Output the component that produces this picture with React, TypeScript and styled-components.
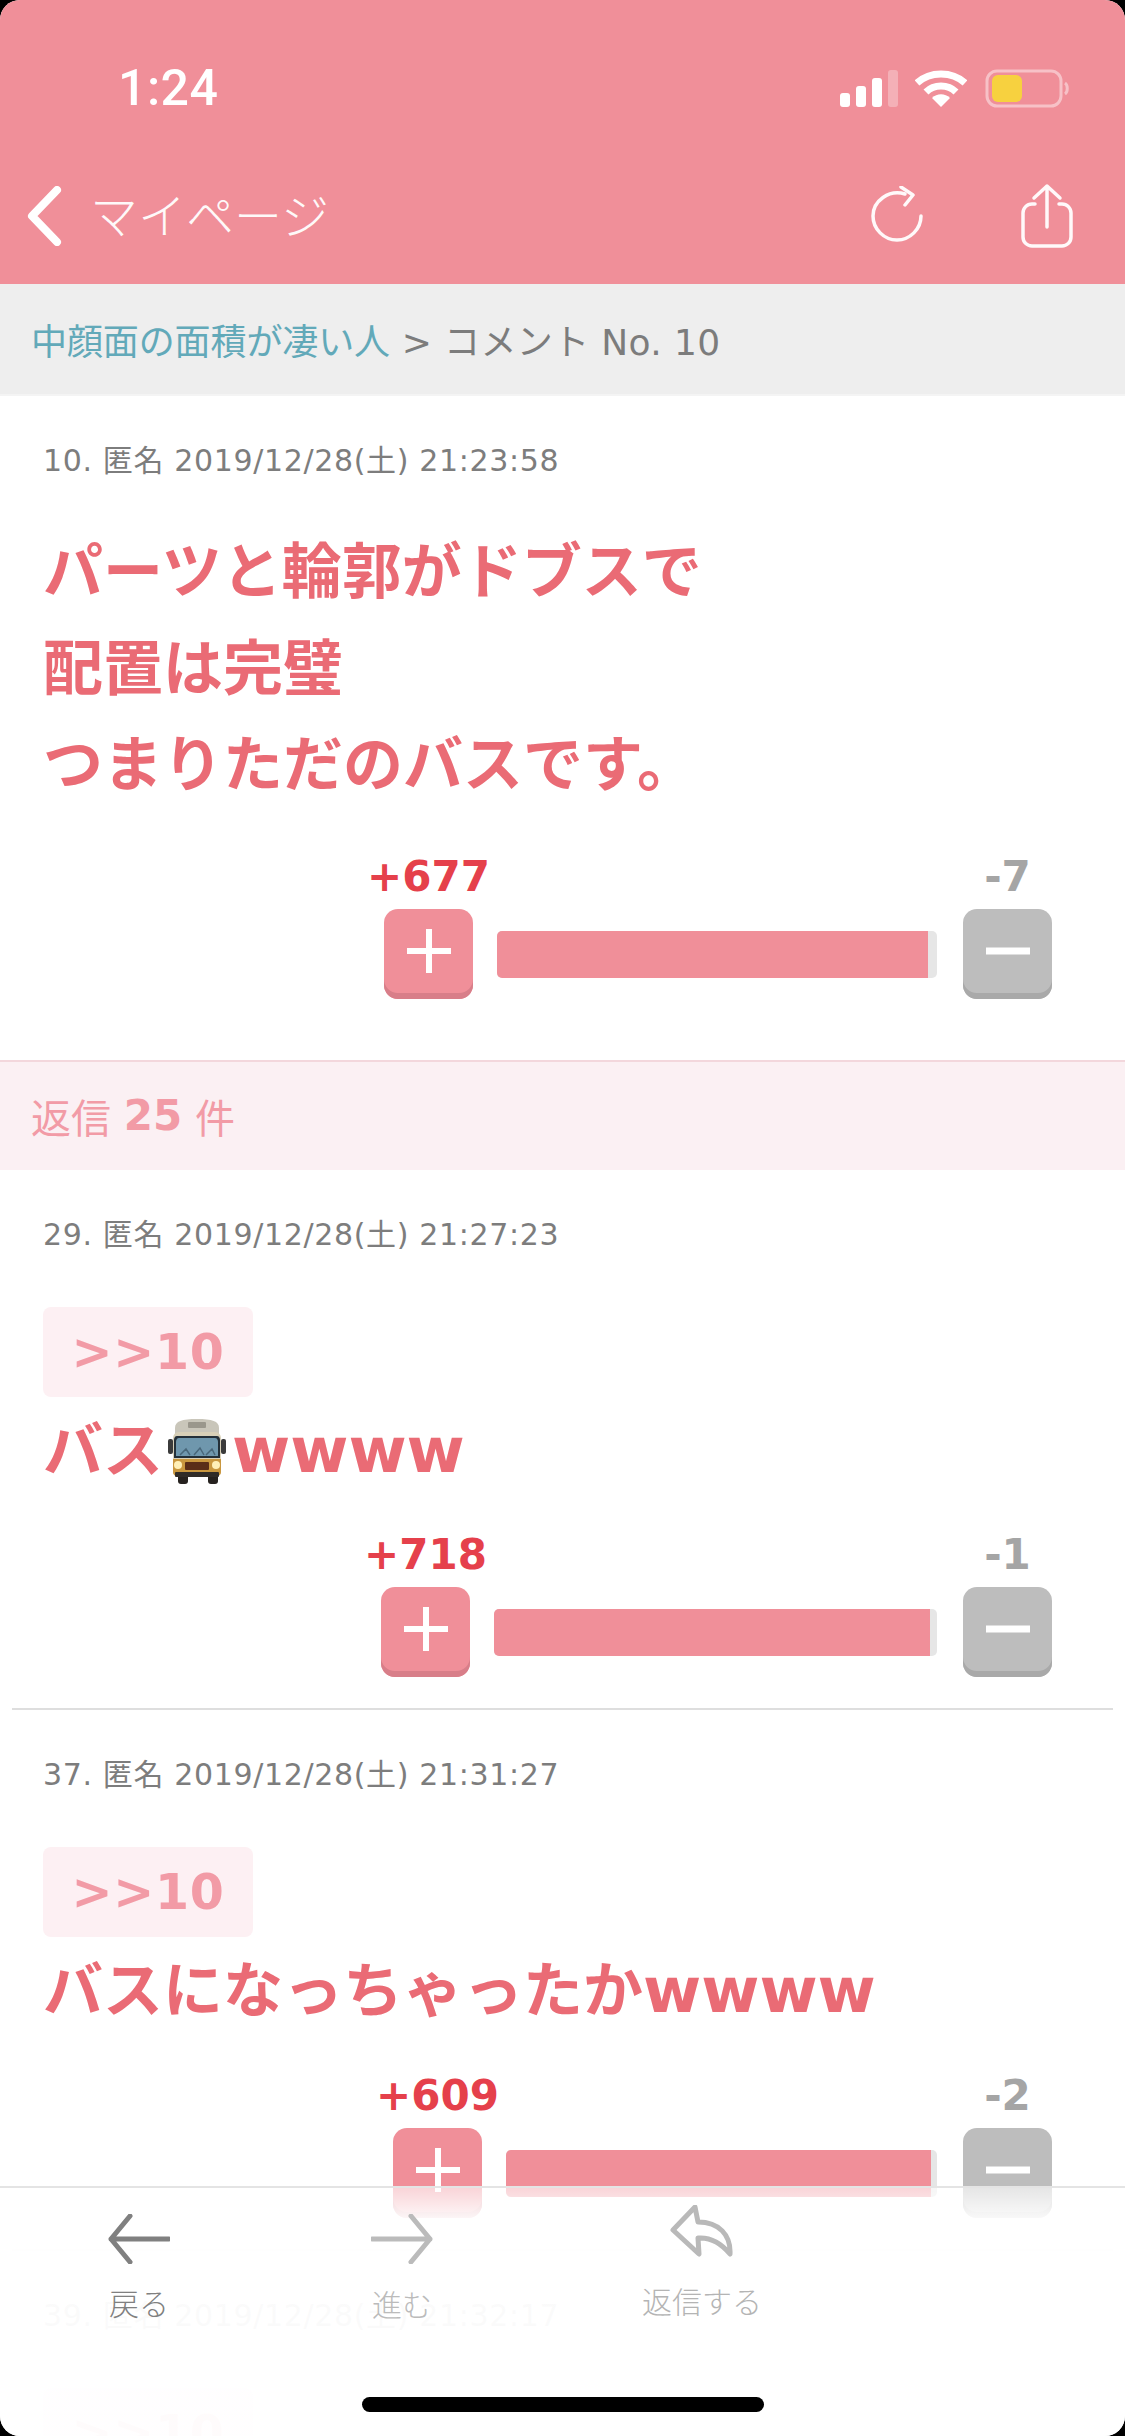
import React from "react";
import styled, { createGlobalStyle } from "styled-components";

const Global = createGlobalStyle`
  html, body { margin: 0; padding: 0; background: #000; }
  * { box-sizing: border-box; }
`;

const Frame = styled.div`
  position: relative;
  width: 1125px;
  height: 2436px;
  overflow: hidden;
  border-radius: 20px;
  background: #fff;
  font-family: "DejaVu Sans", "Noto Sans CJK JP", sans-serif;
`;

const Header = styled.header`
  height: 284px;
  background: #f08f99;
  display: flex;
  flex-direction: column;
  padding-top: 70px;
  color: #fff;
`;

const StatusRow = styled.div`
  height: 37px;
  display: flex;
  align-items: center;
  justify-content: space-between;
  padding: 0 56px 0 118px;
`;

const Clock = styled.span`
  font-family: Roboto, "Liberation Sans", sans-serif;
  font-weight: 500;
  font-size: 50px;
  line-height: 37px;
  letter-spacing: 0.5px;
`;

const StatusIcons = styled.div`
  display: flex;
  align-items: center;
`;

const NavRow = styled.div`
  margin-top: 79px;
  height: 60px;
  display: flex;
  align-items: center;
  justify-content: space-between;
  padding: 0 48px 0 26px;
`;

const NavLeft = styled.div`
  display: flex;
  align-items: center;
  gap: 28px;
`;

const NavTitle = styled.span`
  font-family: "Noto Sans CJK JP", sans-serif;
  font-weight: 300;
  font-size: 48px;
  line-height: 54px;
  padding-bottom: 6px;
  color: #fff;
  opacity: 0.95;
`;

const NavRight = styled.div`
  display: flex;
  align-items: center;
  gap: 92px;
`;

const Breadcrumb = styled.nav`
  height: 112px;
  background: #eeeeee;
  border-bottom: 2px solid #f4f4f4;
  display: flex;
  align-items: center;
  padding-left: 31px;
  font-size: 36px;
  letter-spacing: 0.35px;
  color: #7c7c7c;
  white-space: pre;
`;

const CrumbLink = styled.span`
  color: #62a9b9;
  letter-spacing: -0.1px;
`;

const Post = styled.article<{ $bottom: number }>`
  padding: 45px 0 ${(p) => p.$bottom}px;
`;

const Meta = styled.div`
  padding-left: 43px;
  font-size: 30px;
  letter-spacing: 0.65px;
  line-height: 40px;
  color: #7d7d7d;
  white-space: pre;
`;

const Quote = styled.div`
  margin: 52px 0 0 43px;
  width: 210px;
  height: 90px;
  border-radius: 8px;
  background: #fdf0f3;
  color: #f29ba6;
  font-size: 49px;
  font-weight: 700;
  letter-spacing: 0.7px;
  line-height: 91px;
  text-align: center;
`;

const Body = styled.div<{ $top: number }>`
  margin-top: ${(p) => p.$top}px;
  padding-left: 43px;
  font-size: 60px;
  font-weight: 700;
  line-height: 96.5px;
  color: #ea6b75;
  white-space: pre;
`;

const Latin = styled.span`
  font-size: 63px;
`;

const BusIcon = styled.svg`
  display: inline-block;
  vertical-align: -12px;
  margin: 0 6px 0 5px;
`;

const Vote = styled.div<{ $top: number }>`
  margin-top: ${(p) => p.$top}px;
  display: flex;
  justify-content: flex-end;
  align-items: flex-end;
  padding-right: 73px;
`;

const VoteColumn = styled.div`
  width: 89px;
  display: flex;
  flex-direction: column;
  align-items: center;
`;

const Count = styled.div<{ $minus?: boolean }>`
  height: 48px;
  margin-bottom: 9px;
  font-size: 42px;
  font-weight: 700;
  line-height: 50px;
  white-space: nowrap;
  color: ${(p) => (p.$minus ? "#a5a5a5" : "#e5404b")};
`;

const VoteButton = styled.div<{ $minus?: boolean }>`
  width: 89px;
  height: 90px;
  border-radius: 14px;
  display: flex;
  align-items: center;
  justify-content: center;
  padding-bottom: 6px;
  background: ${(p) => (p.$minus ? "#bdbdbd" : "#f08f99")};
  box-shadow: inset 0 -6px 0 ${(p) => (p.$minus ? "#a9a9a9" : "#d87e89")};
`;

const Track = styled.div<{ $width: number }>`
  width: ${(p) => p.$width}px;
  height: 47px;
  margin: 0 26px 21px 24px;
  border-radius: 5px;
  overflow: hidden;
  background: #e6e6e6;
`;

const Fill = styled.div`
  height: 100%;
  background: #f08f99;
`;

const Divider = styled.hr`
  margin: 0 12px;
  border: 0;
  height: 2px;
  background: #dedede;
`;

const ReplyBar = styled.div`
  height: 110px;
  background: #fbf0f3;
  border-top: 2px solid #f3d7dc;
  display: flex;
  align-items: center;
  padding-left: 31px;
  font-size: 40px;
  color: #f29ba6;
  white-space: pre;
`;

const ReplyCount = styled.b`
  font-weight: 700;
  font-size: 42px;
`;

const Toolbar = styled.footer`
  position: absolute;
  left: 0;
  right: 0;
  bottom: 0;
  height: 250px;
  display: flex;
  border-top: 2px solid #e4e4e4;
  background: linear-gradient(rgba(255, 255, 255, 0.62), rgba(255, 255, 255, 0.97) 34px, rgba(255, 255, 255, 0.96));
`;

const ToolItem = styled.div<{ $width: number; $top: number; $color: string }>`
  width: ${(p) => p.$width}px;
  padding-top: ${(p) => p.$top}px;
  display: flex;
  flex-direction: column;
  align-items: center;
  font-family: "Noto Sans CJK JP", sans-serif;
  font-weight: 300;
  font-size: 30px;
  line-height: 40px;
  color: ${(p) => p.$color};
`;

const ToolLabel = styled.span<{ $gap: number }>`
  margin-top: ${(p) => p.$gap}px;
`;

const HomeBar = styled.div`
  position: absolute;
  left: 362px;
  bottom: 24px;
  width: 402px;
  height: 15px;
  border-radius: 8px;
  background: #000;
`;

const Signal = () => (
  <svg width="58" height="38" viewBox="0 0 58 38">
    <rect x="0" y="23" width="10" height="14" rx="3" fill="#fff" />
    <rect x="16" y="16" width="10" height="21" rx="3" fill="#fff" />
    <rect x="32" y="8" width="10" height="29" rx="3" fill="#fff" />
    <rect x="48" y="0" width="10" height="37" rx="3" fill="#fff" opacity="0.3" />
  </svg>
);

const WifiSvg = styled.svg`
  margin-left: 17px;
`;

const BatterySvg = styled.svg`
  margin-left: 18px;
`;

const Wifi = () => (
  <WifiSvg width="52" height="38" viewBox="0 0 52 38">
    <path d="M2 13C15 1 37 1 50 13" fill="none" stroke="#fff" strokeWidth="7" />
    <path d="M11 22C19 14 33 14 41 22" fill="none" stroke="#fff" strokeWidth="7" />
    <path d="M26 37L17 28C22 23 30 23 35 28Z" fill="#fff" />
  </WifiSvg>
);

const Battery = () => (
  <BatterySvg width="84" height="40" viewBox="0 0 84 40">
    <rect x="2" y="2" width="74" height="35" rx="10" fill="none" stroke="#fff" strokeOpacity="0.45" strokeWidth="3" />
    <rect x="7" y="6" width="30" height="27" rx="6" fill="#f7d13f" />
    <path d="M80 14C83 16 83 23 80 25" fill="none" stroke="#fff" strokeOpacity="0.45" strokeWidth="3" />
  </BatterySvg>
);

const Back = () => (
  <svg width="36" height="60" viewBox="0 0 36 60">
    <path d="M31 4L6 30L31 56" fill="none" stroke="#fff" strokeWidth="8" strokeLinecap="round" strokeLinejoin="round" />
  </svg>
);

const Refresh = () => (
  <svg width="55" height="60" viewBox="0 0 55 60">
    <path d="M35 8C19 3 3 15 3 30C3 43 14 54 27 54C40 54 51 43 51 30" fill="none" stroke="#fff" strokeOpacity="0.95" strokeWidth="3.5" strokeLinecap="round" />
    <path d="M31 1L43 9L35 19" fill="none" stroke="#fff" strokeOpacity="0.95" strokeWidth="3.5" strokeLinecap="round" strokeLinejoin="round" />
  </svg>
);

const Share = () => (
  <svg width="60" height="66" viewBox="0 0 60 66">
    <path d="M18 21H15C10 21 6 25 6 30V54C6 59 10 63 15 63H45C50 63 54 59 54 54V30C54 25 50 21 45 21H42" fill="none" stroke="#fff" strokeOpacity="0.95" strokeWidth="3.5" strokeLinecap="round" />
    <path d="M30 44V3M17 15L30 3L43 15" fill="none" stroke="#fff" strokeOpacity="0.95" strokeWidth="3.5" strokeLinecap="round" strokeLinejoin="round" />
  </svg>
);

const Bus = () => (
  <BusIcon width="58" height="66" viewBox="0 0 58 66">
    <rect x="10" y="54" width="10" height="12" rx="3" fill="#26221f" />
    <rect x="40" y="54" width="10" height="12" rx="3" fill="#26221f" />
    <rect x="0" y="21" width="5" height="15" rx="2" fill="#3b3b3b" />
    <rect x="53" y="21" width="5" height="15" rx="2" fill="#3b3b3b" />
    <path d="M7 10C7 3 14 1 29 1C44 1 51 3 51 10V17H7Z" fill="#c9c6ba" />
    <rect x="20" y="4" width="18" height="6" rx="1" fill="#9a978c" />
    <rect x="5" y="14" width="48" height="44" rx="6" fill="#d8d0b8" />
    <path d="M9 18H49C51 18 52 20 52 22V40H6V22C6 20 7 18 9 18Z" fill="#243039" />
    <path d="M11 20H47C49 20 50 22 50 24V38H8V24C8 22 9 20 11 20Z" fill="#6f97ad" />
    <path d="M12 37L18 31L22 37M26 37L32 30L36 37M38 37L44 31L47 37" fill="none" stroke="#48677a" strokeWidth="1.5" />
    <path d="M5 41H53V54C53 57 51 58 48 58H10C7 58 5 57 5 54Z" fill="#c9973f" />
    <rect x="17" y="44" width="24" height="8" rx="1" fill="#5a2d18" />
    <circle cx="10" cy="47" r="4" fill="#fff0b8" />
    <circle cx="48" cy="47" r="4" fill="#fff0b8" />
    <rect x="7" y="54" width="44" height="5" rx="1" fill="#302c28" />
  </BusIcon>
);

const PlusMark = () => (
  <svg width="44" height="44" viewBox="0 0 44 44">
    <path d="M22 0V44M0 22H44" stroke="#fff" strokeWidth="6" />
  </svg>
);

const MinusMark = () => (
  <svg width="44" height="44" viewBox="0 0 44 44">
    <path d="M0 22H44" stroke="#fff" strokeWidth="7" />
  </svg>
);

const ArrowLeft = () => (
  <svg width="62" height="50" viewBox="0 0 62 50">
    <path d="M22 2L3 25L22 48M3 25H61" fill="none" stroke="#808080" strokeWidth="5" strokeLinecap="round" strokeLinejoin="round" />
  </svg>
);

const ArrowRight = () => (
  <svg width="62" height="50" viewBox="0 0 62 50">
    <path d="M40 2L59 25L40 48M59 25H1" fill="none" stroke="#bbbbbb" strokeWidth="5" strokeLinecap="round" strokeLinejoin="round" />
  </svg>
);

const ReplyArrow = () => (
  <svg width="64" height="52" viewBox="0 0 64 52">
    <path d="M25 2L3 25L29 49L28 33C41 32 51 38 60 49C61 30 49 17 28 17Z" fill="none" stroke="#b9b9b9" strokeWidth="5" strokeLinejoin="round" />
  </svg>
);

type VoteData = { plus: number; minus: number; barWidth: number; fill: number };

const Votes = ({ plus, minus, barWidth, fill, top }: VoteData & { top: number }) => (
  <Vote $top={top}>
    <VoteColumn>
      <Count>+{plus}</Count>
      <VoteButton>
        <PlusMark />
      </VoteButton>
    </VoteColumn>
    <Track $width={barWidth}>
      <Fill style={{ width: `${fill}%` }} />
    </Track>
    <VoteColumn>
      <Count $minus>-{minus}</Count>
      <VoteButton $minus>
        <MinusMark />
      </VoteButton>
    </VoteColumn>
  </Vote>
);

export default function App() {
  return (
    <>
      <Global />
      <Frame>
        <Header>
          <StatusRow>
            <Clock>1:24</Clock>
            <StatusIcons>
              <Signal />
              <Wifi />
              <Battery />
            </StatusIcons>
          </StatusRow>
          <NavRow>
            <NavLeft>
              <Back />
              <NavTitle>マイページ</NavTitle>
            </NavLeft>
            <NavRight>
              <Refresh />
              <Share />
            </NavRight>
          </NavRow>
        </Header>
        <Breadcrumb>
          <CrumbLink>中顔面の面積が凄い人</CrumbLink>
          {" > コメント No. 10"}
        </Breadcrumb>

        <Post $bottom={61}>
          <Meta>10. 匿名 2019/12/28(土) 21:23:58</Meta>
          <Body $top={43}>
            {"パーツと輪郭がドブスで\n配置は完璧\nつまりただのバスです。"}
          </Body>
          <Votes plus={677} minus={7} barWidth={440} fill={98} top={38} />
        </Post>

        <ReplyBar>
          {"返信 "}
          <ReplyCount>25</ReplyCount>
          {" 件"}
        </ReplyBar>

        <Post $bottom={31}>
          <Meta>29. 匿名 2019/12/28(土) 21:27:23</Meta>
          <Quote>&gt;&gt;10</Quote>
          <Body $top={6}>
            バス
            <Bus />
            <Latin>wwww</Latin>
          </Body>
          <Votes plus={718} minus={1} barWidth={443} fill={98.5} top={31} />
        </Post>
        <Divider />

        <Post $bottom={31}>
          <Meta>37. 匿名 2019/12/28(土) 21:31:27</Meta>
          <Quote>&gt;&gt;10</Quote>
          <Body $top={6}>
            バスになっちゃったか<Latin>wwww</Latin>
          </Body>
          <Votes plus={609} minus={2} barWidth={431} fill={98.5} top={31} />
        </Post>
        <Divider />

        <Post $bottom={31}>
          <Meta>39. 匿名 2019/12/28(土) 21:32:17</Meta>
          <Quote>&gt;&gt;10</Quote>
        </Post>

        <Toolbar>
          <ToolItem $width={278} $top={26} $color="#808080">
            <ArrowLeft />
            <ToolLabel $gap={18}>戻る</ToolLabel>
          </ToolItem>
          <ToolItem $width={248} $top={26} $color="#bbbbbb">
            <ArrowRight />
            <ToolLabel $gap={19}>進む</ToolLabel>
          </ToolItem>
          <ToolItem $width={352} $top={17} $color="#b4b4b4">
            <ReplyArrow />
            <ToolLabel $gap={23}>返信する</ToolLabel>
          </ToolItem>
        </Toolbar>
        <HomeBar />
      </Frame>
    </>
  );
}
